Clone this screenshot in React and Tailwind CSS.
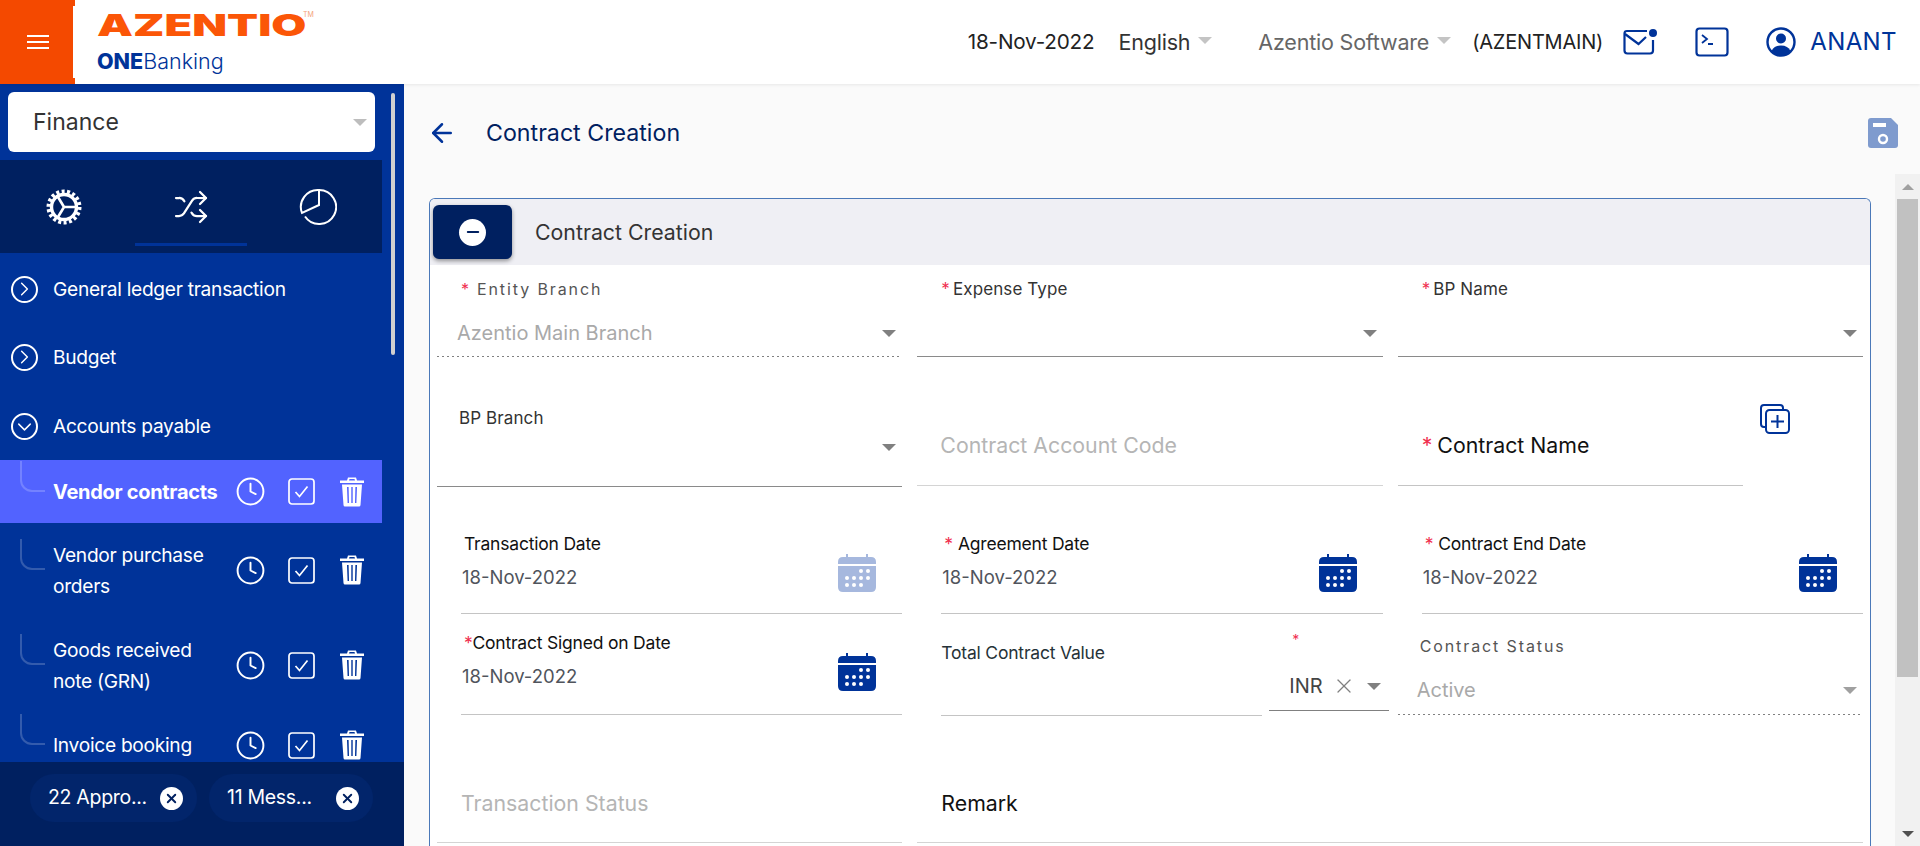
import { ChevronRight, ChevronDown, Shuffle, Clock, ArrowLeft, X, Minus } from 'lucide-react';

const font = { fontFamily: 'Inter, "Noto Sans", sans-serif' };

const Caret = ({ className = 'border-t-[#808080]' }) => (
  <span className={`w-0 h-0 border-x-[7px] border-x-transparent border-t-[7px] ${className}`} />
);

const Star = ({ className = '' }) => <span className={`text-[#f0304f] ${className}`}>*</span>;

const Dotted = () => (
  <div className="h-px bg-[repeating-linear-gradient(90deg,#808080_0_2px,transparent_2px_5px)]" />
);

const Gear = () => (
  <svg width="36" height="36" viewBox="0 0 36 36" fill="none" stroke="white">
    <circle cx="18" cy="18" r="15.5" strokeWidth="4" strokeDasharray="3 2.4" />
    <circle cx="18" cy="18" r="12.5" strokeWidth="3.4" />
    <path d="M18 18 H30 M18 18 L12 8 M18 18 L12 28" strokeWidth="2.6" />
  </svg>
);

const Pie = () => (
  <svg width="38" height="38" viewBox="0 0 38 38" fill="none" stroke="white" strokeWidth="2">
    <path d="M20 2 V17 L3 25 A17 17 0 0 1 20 2 Z" />
    <path d="M20 2 A17 17 0 1 1 6 28.5" />
  </svg>
);

const CheckBox = () => (
  <svg width="27" height="27" viewBox="0 0 27 27" fill="none" stroke="white" strokeWidth="1.7">
    <rect x="1" y="1" width="25" height="25" rx="3" />
    <path d="M7.5 14 L11.5 18.5 L19.5 8.5" />
  </svg>
);

const Trash = () => (
  <svg width="26" height="30" viewBox="0 0 26 30" fill="white">
    <path d="M9 0.5 H17 L18 3.5 H25 V6 H1 V3.5 H8 Z M10.5 2 L10 3.5 H16 L15.5 2 Z" fillRule="evenodd" />
    <path fillRule="evenodd" d="M3 7.5 H23 L21.5 28 Q21.4 29.5 20 29.5 H6 Q4.6 29.5 4.5 28 Z M8 10 L8.6 26 H10 L9.6 10 Z M12.3 10 V26 H13.7 V10 Z M16.4 10 L16 26 H17.4 L18 10 Z" />
  </svg>
);

const Calendar = ({ className = 'text-[#003399]' }) => (
  <svg width="38" height="38" viewBox="0 0 38 38" className={className}>
    <path fill="currentColor" d="M8 0 H10 V3 H28 V0 H30 V3 H33 Q38 3 38 8 V10 H0 V8 Q0 3 5 3 H8 Z" />
    <path fill="currentColor" d="M0 12 H38 V33 Q38 38 33 38 H5 Q0 38 0 33 Z" />
    <g fill="white">
      <circle cx="23" cy="17" r="2" /><circle cx="30" cy="17" r="2" />
      <circle cx="9" cy="24" r="2" /><circle cx="16" cy="24" r="2" /><circle cx="23" cy="24" r="2" /><circle cx="30" cy="24" r="2" />
      <circle cx="9" cy="31" r="2" /><circle cx="16" cy="31" r="2" /><circle cx="23" cy="31" r="2" />
    </g>
  </svg>
);

const MailIcon = () => (
  <svg width="34" height="26" viewBox="0 0 34 26" fill="none" stroke="#003399" strokeWidth="2.2">
    <path d="M24 2 H4 Q1.5 2 1.5 4.5 V21.5 Q1.5 24.5 4.5 24.5 H27 Q30 24.5 30 21.5 V11" />
    <path d="M2 5 L15.5 15 L23 8" />
    <circle cx="30" cy="4" r="4" fill="#003399" stroke="none" />
  </svg>
);

const TerminalIcon = () => (
  <svg width="34" height="30" viewBox="0 0 34 30" fill="none" stroke="#003399" strokeWidth="2.2">
    <rect x="1.5" y="1.5" width="31" height="27" rx="3" />
    <path d="M7 8 L12 12 L7 16 M13 17 H18" strokeWidth="1.8" />
  </svg>
);

const UserIcon = () => (
  <svg width="30" height="30" viewBox="0 0 30 30">
    <circle cx="15" cy="15" r="13.5" fill="none" stroke="#003399" strokeWidth="2.4" />
    <circle cx="15" cy="11.5" r="5" fill="#003399" />
    <path d="M5.5 24 Q8 18.5 15 18.5 Q22 18.5 24.5 24 Q20 28.5 15 28.5 Q10 28.5 5.5 24 Z" fill="#003399" />
  </svg>
);

const SaveIcon = () => (
  <svg width="30" height="30" viewBox="0 0 30 30">
    <path fill="#7f9bce" d="M3 0 H23 L30 7 V27 Q30 30 27 30 H3 Q0 30 0 27 V3 Q0 0 3 0 Z" />
    <rect x="5" y="5" width="13" height="4" fill="white" />
    <circle cx="15" cy="21" r="4" fill="none" stroke="white" strokeWidth="2.4" />
  </svg>
);

const AddCopyIcon = () => (
  <svg width="30" height="30" viewBox="0 0 30 30" fill="none" stroke="#003399" strokeWidth="2">
    <path d="M23 6 V4 Q23 1 20 1 H4 Q1 1 1 4 V20 Q1 23 4 23 H6" />
    <rect x="6" y="6" width="23" height="23" rx="3.5" />
    <path d="M17.5 11 V24 M11 17.5 H24" />
  </svg>
);

const Connector = () => (
  <span className="absolute left-[20px] bottom-1/2 w-[25px] h-[31px] border-l-2 border-b-2 border-white/20 rounded-bl-[12px]" />
);

const GroupRow = ({ open, label, className = '' }) => (
  <div className={`h-[68px] flex items-center pl-[11px] text-white text-[19.2px] tracking-[-0.3px] ${className}`}>
    <span className="w-[27px] h-[27px] rounded-full border-2 border-white flex items-center justify-center">
      {open ? <ChevronDown size={24} strokeWidth={1.5} /> : <ChevronRight size={24} strokeWidth={1.5} />}
    </span>
    <span className="ml-[15px]">{label}</span>
  </div>
);

const ChildRow = ({ lines, height, active }) => (
  <div className={`relative flex items-center pl-[53px] text-white leading-[31px] tracking-[-0.3px] ${height} ${active ? 'bg-[#5263ff] font-bold text-[20px]' : 'text-[19.2px]'}`}>
    <Connector />
    <div className="w-[182px] mt-[1px]">
      {lines.map((l) => (
        <div key={l} className="whitespace-nowrap">{l}</div>
      ))}
    </div>
    <Clock size={31} strokeWidth={1.5} className="text-white" />
    <span className="ml-[22px]"><CheckBox /></span>
    <span className="ml-[24px]"><Trash /></span>
  </div>
);

const Chip = ({ text, width }) => (
  <div className={`h-[48px] rounded-full bg-[#02256b] flex items-center justify-between pl-[18px] pr-[14px] text-white text-[19.5px] tracking-[-0.3px] ${width}`}>
    <span>{text}</span>
    <span className="w-[23px] h-[23px] rounded-full bg-white flex items-center justify-center">
      <X size={15} strokeWidth={3} className="text-[#002060]" />
    </span>
  </div>
);

const Sidebar = () => (
  <aside className="relative w-[404px] shrink-0 bg-[#003399] flex flex-col h-[762px] overflow-hidden">
    <div className="absolute right-[9px] top-[9px] w-[4px] h-[262px] rounded bg-[#d0d0d0]" />
    <div className="pt-[8px] pl-[8px]">
      <div className="w-[367px] h-[60px] rounded-md bg-white flex items-center justify-between pl-[25px] pr-[8px] text-[23px] text-[#333]">
        <span>Finance</span>
        <Caret className="border-t-[#bdbdbd]" />
      </div>
    </div>
    <div className="relative mt-[8px] w-[382px] h-[93px] bg-[#002060] grid grid-cols-3 items-center justify-items-center shrink-0">
      <Gear />
      <Shuffle size={36} strokeWidth={1.5} className="text-white" />
      <Pie />
      <span className="absolute left-[135px] top-[83px] w-[112px] h-[3px] bg-[#003399]" />
    </div>
    <div className="w-[382px] pt-[2px] flex-1 overflow-hidden">
      <GroupRow label="General ledger transaction" />
      <GroupRow label="Budget" />
      <GroupRow open label="Accounts payable" className="h-[69px] pt-[2px]" />
      <ChildRow active lines={['Vendor contracts']} height="h-[63px]" />
      <ChildRow lines={['Vendor purchase', 'orders']} height="h-[94px]" />
      <ChildRow lines={['Goods received', 'note (GRN)']} height="h-[96px]" />
      <ChildRow lines={['Invoice booking']} height="h-[64px]" />
    </div>
  </aside>
);

const Field = ({ children, line = 'border-[#c4c4c4]', className = '' }) => (
  <div className={`border-b ${line} ${className}`}>{children}</div>
);

const SelectField = ({ label, star, tracked, value, dotted }) => (
  <div className="h-[92px] flex flex-col">
    <div className={`flex-1 pt-[14px] ${dotted ? '' : 'border-b border-[#8a8a8a]'}`}>
      <div className={`pl-[24px] h-[20px] leading-[20px] whitespace-nowrap ${tracked ? 'text-[16px] tracking-[1.9px] text-[#555]' : 'text-[17px] tracking-[0.1px] text-[#333]'}`}>
        {star && <Star className={tracked ? 'mr-[6px]' : 'mr-[3px]'} />}
        {label}
      </div>
      <div className="mt-[22px] h-[24px] pl-[20px] pr-[6px] flex items-center justify-between text-[20px] text-[#a9a9a9]">
        <span>{value}</span>
        <Caret />
      </div>
    </div>
    {dotted && <Dotted />}
  </div>
);

const DateField = ({ star, tight, label, iconClass, height }) => (
  <div className={`ml-[24px] border-b border-[#c4c4c4] ${height}`}>
    <div className="h-[22px] pl-[3px] text-[17.5px] leading-[22px] text-[#111] tracking-[-0.2px] whitespace-nowrap">
      {star && <Star className={tight ? '' : 'mr-[5px]'} />}
      {label}
    </div>
    <div className="flex items-start justify-between pr-[26px]">
      <span className="mt-[10px] ml-[1px] text-[18.5px] leading-[24px] text-[#50545c]">18-Nov-2022</span>
      <span className="-mt-[1px]"><Calendar className={iconClass} /></span>
    </div>
  </div>
);

const Form = () => (
  <div className="grid grid-cols-3 gap-x-[15px] pl-[7px] pr-[7px] grid-rows-[92px_130px_128px_100px_128px]">
    <SelectField star tracked label="Entity Branch" value="Azentio Main Branch" dotted />
    <SelectField star label="Expense Type" />
    <SelectField star label="BP Name" />

    <div className="h-[130px] pt-[51px] border-b border-[#8a8a8a]">
      <div className="pl-[22px] h-[20px] text-[17px] tracking-[0.1px] leading-[20px] text-[#333]">BP Branch</div>
      <div className="mt-[16px] pr-[6px] flex justify-end"><Caret /></div>
    </div>
    <Field className="h-[129px] pt-[74px] pl-[23px] text-[21.3px] leading-[28px] text-[#b5b5b5]" line="border-[#d4d4d4]">
      Contract Account Code
    </Field>
    <div className="flex h-[129px]">
      <Field className="w-[345px] pt-[74px] pl-[24px] text-[21.3px] leading-[28px] text-[#111]">
        <Star className="mr-[5px]" />
        Contract Name
      </Field>
      <span className="ml-[17px] mt-[47px]"><AddCopyIcon /></span>
    </div>

    <DateField label="Transaction Date" iconClass="text-[#a6b8de]" height="h-[127px] pt-[46px]" />
    <DateField star label="Agreement Date" height="h-[127px] pt-[46px]" />
    <DateField star label="Contract End Date" height="h-[127px] pt-[46px]" />

    <DateField star tight label="Contract Signed on Date" height="h-[100px] pt-[17px]" />
    <div className="flex h-[101px]">
      <Field className="ml-[24px] w-[321px] shrink-0 pt-[27px] text-[17.5px] leading-[22px] tracking-[-0.2px] text-[#263238]">
        Total Contract Value
      </Field>
      <div className="ml-[7px] w-[120px] shrink-0 h-[96px] border-b border-[#808080] relative">
        <Star className="absolute left-[23px] top-[14px] text-[14px]" />
        <div className="mt-[59px] pl-[20px] flex items-center text-[20px] leading-[24px] text-[#444]">
          <span>INR</span>
          <X size={24} strokeWidth={1.3} className="ml-[9px] text-[#808080]" />
          <span className="ml-[11px] flex"><Caret /></span>
        </div>
      </div>
    </div>
    <div className="h-[100px] flex flex-col">
      <div className="flex-1 pt-[21px]">
        <div className="pl-[22px] h-[20px] text-[16px] leading-[20px] tracking-[1.9px] text-[#555]">Contract Status</div>
        <div className="mt-[22px] pl-[19px] pr-[6px] flex items-center justify-between text-[20px] leading-[24px] text-[#a9a9a9]">
          <span>Active</span>
          <Caret className="border-t-[#a0a0a0]" />
        </div>
      </div>
      <Dotted />
    </div>

    <Field className="h-[128px] pt-[74px] pl-[24px] text-[21.3px] leading-[28px] text-[#b5b5b5]" line="border-[#d4d4d4]">
      Transaction Status
    </Field>
    <Field className="col-span-2 h-[128px] pt-[74px] pl-[24px] text-[21.3px] leading-[28px] text-[#111]" line="border-[#d4d4d4]">
      Remark
    </Field>
  </div>
);

const Main = () => (
  <main className="flex-1 bg-[#fafafa] pl-[25px] h-[762px] overflow-hidden">
    <div className="h-[114px] pt-[34px] flex items-start pr-[22px] text-[#002060]">
      <ArrowLeft size={30} strokeWidth={2} className="text-[#003399] -ml-[2px]" />
      <span className="ml-[29px] text-[23.2px] leading-[30px]">Contract Creation</span>
      <span className="ml-auto"><SaveIcon /></span>
    </div>
    <div className="flex items-start">
      <section className="w-[1442px] h-[700px] border-t border-x border-[#4a78b8] rounded-t-md bg-white overflow-hidden shrink-0">
        <div className="h-[66px] bg-[#efeff4] flex items-center pl-[3px]">
          <div className="w-[79px] h-[54px] rounded-md bg-[#002060] shadow-[0_2px_4px_rgba(0,0,0,0.4)] flex items-center justify-center">
            <span className="w-[27px] h-[27px] rounded-full bg-white flex items-center justify-center">
              <Minus size={18} strokeWidth={2.5} className="text-[#002060]" />
            </span>
          </div>
          <span className="ml-[23px] mt-[2px] text-[21.3px] text-[#333]">Contract Creation</span>
        </div>
        <Form />
      </section>
      <div className="ml-[24px] -mt-[24px] w-[25px] h-[672px] bg-[#f1f1f1] flex flex-col items-center shrink-0">
        <div className="h-[25px] flex items-center">
          <span className="w-0 h-0 border-x-[6px] border-x-transparent border-b-[6px] border-b-[#a0a0a0]" />
        </div>
        <div className="w-[21px] h-[478px] bg-[#c1c1c1]" />
        <div className="mt-auto h-[25px] flex items-center">
          <span className="w-0 h-0 border-x-[6px] border-x-transparent border-t-[6px] border-t-[#505050]" />
        </div>
      </div>
    </div>
  </main>
);

const Header = () => (
  <header className="relative z-10 h-[84px] bg-white flex items-stretch shadow-[0_1px_3px_rgba(0,0,0,0.08)]">
    <div className="relative w-[73px] bg-[#f44900] flex items-center pl-[27px]">
      <span className="absolute left-[73px] top-0 w-[2px] h-[6px] bg-[#f44900]" />
      <span className="absolute left-[73px] bottom-0 w-[2px] h-[6px] bg-[#f44900]" />
      <svg width="22" height="16" viewBox="0 0 22 16" stroke="white" strokeWidth="2.2">
        <path d="M0 2 H22 M0 8 H22 M0 14 H22" />
      </svg>
    </div>
    <div className="ml-[24px] pt-[10px]">
      <div className="relative h-[30px]">
        <span className="block origin-left scale-x-[1.51] text-[30px] leading-[30px] font-black text-[#fb5607]">AZENTIO</span>
        <span className="absolute left-[206px] top-[0px] text-[7px] leading-[10px] text-[#f4a27a]">TM</span>
      </div>
      <div className="mt-[8px] text-[21.5px] leading-[26px] text-[#003399] font-light">
        <span className="font-extrabold">ONE</span>Banking
      </div>
    </div>
    <div className="ml-auto pr-[23px] flex items-center text-[21.5px] tracking-[-0.2px]">
      <span className="text-[20.7px] text-[#222]">18-Nov-2022</span>
      <span className="ml-[24px] text-[#333]">English</span>
      <span className="ml-[8px] -mt-[3px] flex"><Caret className="border-t-[#c4c4c4]" /></span>
      <span className="ml-[46px] text-[#666]">Azentio Software</span>
      <span className="ml-[8px] -mt-[3px] flex"><Caret className="border-t-[#c4c4c4]" /></span>
      <span className="ml-[21px] text-[20px] text-[#222]">(AZENTMAIN)</span>
      <span className="ml-[20px]"><MailIcon /></span>
      <span className="ml-[38px]"><TerminalIcon /></span>
      <span className="ml-[37px]"><UserIcon /></span>
      <span className="ml-[14px] text-[24px] tracking-[0.4px] text-[#003399]">ANANT</span>
    </div>
  </header>
);

export default function App() {
  return (
    <div style={font} className="w-[1920px] h-[846px] overflow-hidden relative bg-white">
      <Header />
      <div className="flex">
        <Sidebar />
        <Main />
      </div>
      <div className="w-[404px] h-[84px] bg-[#002060] absolute left-0 bottom-0 flex gap-[12px] pl-[30px] pt-[12px]">
        <Chip text="22 Appro..." width="w-[167px]" />
        <Chip text="11 Mess..." width="w-[164px]" />
      </div>
    </div>
  );
}
